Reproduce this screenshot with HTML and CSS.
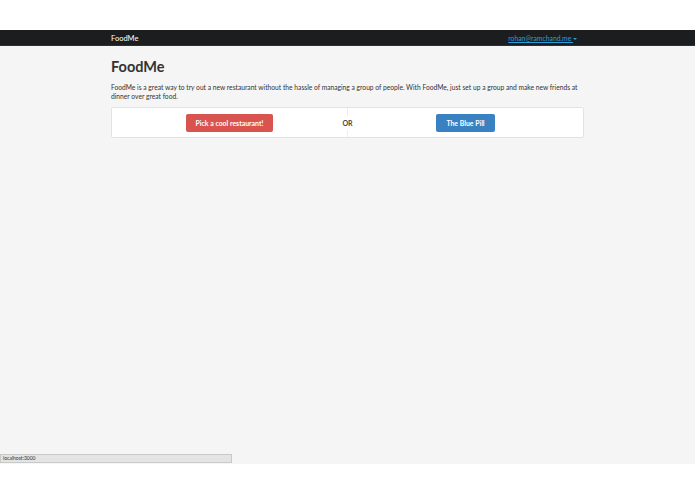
FILE: index.html
```html
<!DOCTYPE html>
<html lang="en">
<head>
  <meta charset="UTF-8">
  <meta name="viewport" content="width=device-width, initial-scale=1.0">
  <title>FoodMe</title>
  <link rel="stylesheet" href="styles.css">
</head>
<body>
  <div class="top-gap"></div>
  <div class="page">
    <nav class="navbar">
      <div class="container nav-inner">
        <a class="brand" href="#">FoodMe</a>
        <a class="user" href="#">rohan@ramchand.me <span class="caret"></span></a>
      </div>
    </nav>
    <main class="container">
      <h1>FoodMe</h1>
      <p class="lead">FoodMe is a great way to try out a new restaurant without the hassle of managing a group of people. With FoodMe, just set up a group and make new friends at dinner over great food.</p>
      <div class="choice">
        <div class="half">
          <button class="btn btn-red">Pick a cool restaurant!</button>
        </div>
        <div class="half">
          <button class="btn btn-blue">The Blue Pill</button>
        </div>
        <span class="or">OR</span>
      </div>
    </main>
    <div class="status">localhost:3000</div>
  </div>
  <div class="bottom-gap"></div>
</body>
</html>
```
FILE: styles.css
```css
* { box-sizing: border-box; }
body {
  margin: 0;
  font-family: Lato, "Open Sans", sans-serif;
  color: #333;
  background: #fff;
}
.top-gap, .bottom-gap {
  height: 30px;
  background: #fff;
}
.page {
  position: relative;
  height: 434px;
  background: #f5f5f5;
}
.container {
  width: 473px;
  margin: 0 auto;
}
.navbar {
  height: 16px;
  background: #1c1d1f;
  border-bottom: 1px solid #2e2f31;
}
.nav-inner {
  display: flex;
  justify-content: space-between;
  align-items: center;
  height: 100%;
  padding-top: 1px;
}
.brand {
  color: #fff;
  font-size: 7.5px;
  text-decoration: none;
}
.user {
  color: #2a9fd6;
  font-size: 6.8px;
  margin-right: 7px;
  text-decoration: underline;
}
.caret {
  display: inline-block;
  width: 0;
  height: 0;
  vertical-align: middle;
  border-top: 2px solid #2a9fd6;
  border-left: 2px solid transparent;
  border-right: 2px solid transparent;
}
h1 {
  margin: 12px 0 0;
  font-size: 14.5px;
  font-weight: 700;
  line-height: 18px;
  color: #333;
}
.lead {
  margin: 7px 0 0;
  font-size: 6.7px;
  line-height: 9px;
}
.choice {
  position: relative;
  display: flex;
  height: 31px;
  margin-top: 6px;
  background: #fff;
  border: 1px solid #e3e3e3;
  border-radius: 2px;
}
.half {
  flex: 1;
  display: flex;
  align-items: center;
  justify-content: center;
}
.half + .half {
  border-left: 1px solid #eee;
}
.btn {
  height: 18px;
  padding: 0 10px;
  border: none;
  border-radius: 2px;
  color: #fff;
  font-family: inherit;
  font-size: 6.9px;
  font-weight: 700;
}
.btn-red { background: #d9534f; }
.btn-blue { background: #3a81c2; }
.or {
  position: absolute;
  left: 50%;
  top: 50%;
  transform: translate(-50%, -50%);
  padding: 3px 1px;
  background: #fff;
  font-size: 7px;
  font-weight: 700;
  color: #444;
}
.status {
  position: absolute;
  left: 0;
  bottom: 1px;
  width: 232px;
  height: 9px;
  padding-left: 2px;
  background: #e4e4e4;
  border: 1px solid #c9c9c9;
  font-size: 5px;
  line-height: 7px;
  color: #333;
}
```
